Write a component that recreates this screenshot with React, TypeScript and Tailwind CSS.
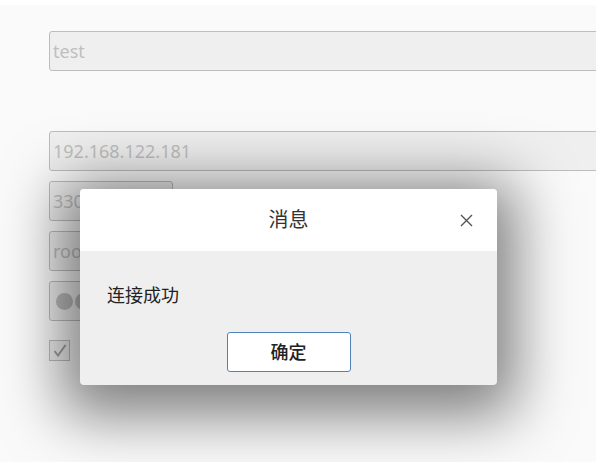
import React from "react";

const font = { fontFamily: '"Noto Sans", "Noto Sans CJK SC", sans-serif' };

const Field = ({ text, narrow }: { text: React.ReactNode; narrow?: boolean }) => (
  <div
    className={`flex h-[40px] shrink-0 items-center rounded-[3px] border border-[#bdbdbd] bg-[#efefef] pl-[3px] text-[18px] text-[#bfbfbf] ${
      narrow ? "w-[124px]" : "w-[600px]"
    }`}
  >
    {text}
  </div>
);

const App = () => {
  return (
    <main
      className="relative h-[462px] w-[596px] overflow-hidden border-t-[5px] border-white bg-[#fafafa]"
      style={font}
    >
      <div className="flex flex-col pl-[49px] pt-[26px]">
        <Field text="test" />
        <div className="h-[60px]" />
        <Field text="192.168.122.181" />
        <div className="mt-[10px] flex flex-col gap-[10px]">
          <Field text="3306" narrow />
          <Field text="root" narrow />
          <Field
            narrow
            text={
              <span className="flex gap-[2px] pl-[3px]">
                <span className="h-[17px] w-[17px] rounded-full bg-[#bdbdbd]" />
                <span className="h-[17px] w-[17px] rounded-full bg-[#bdbdbd]" />
                <span className="h-[17px] w-[17px] rounded-full bg-[#bdbdbd]" />
                <span className="h-[17px] w-[17px] rounded-full bg-[#bdbdbd]" />
              </span>
            }
          />
        </div>
        <div className="mt-[19px] flex h-[21px] w-[21px] items-center justify-center border border-[#bdbdbd] bg-[#efefef]">
          <svg width="14" height="13" viewBox="0 0 14 13" fill="none">
            <path d="M1.5 7 L5 11.5 L12.5 1" stroke="#a0a0a0" strokeWidth="2" />
          </svg>
        </div>
      </div>

      {/* message dialog */}
      <div className="absolute left-[80px] top-[184px] flex h-[196px] w-[417px] flex-col overflow-hidden rounded-[4px] bg-[#efefef] shadow-[0_12px_60px_18px_rgba(0,0,0,0.5)]">
        <header className="relative flex h-[62px] items-center justify-center bg-white">
          <h2 className="text-[20px] text-[#333333]">消息</h2>
          <svg
            className="absolute right-[24px] top-[25px]"
            width="13"
            height="13"
            viewBox="0 0 13 13"
          >
            <path d="M1 1 L12 12 M12 1 L1 12" stroke="#555555" strokeWidth="1.4" />
          </svg>
        </header>
        <p className="pl-[27px] pt-[32px] text-[18px] leading-[24px] text-[#222222]">连接成功</p>
        <div className="mt-[25px] flex justify-center">
          <button className="flex h-[40px] w-[124px] items-center justify-center rounded-[3px] border border-[#4f83b8] bg-white text-[18px] font-medium text-[#222222]">
            确定
          </button>
        </div>
      </div>
    </main>
  );
};

export default App;
